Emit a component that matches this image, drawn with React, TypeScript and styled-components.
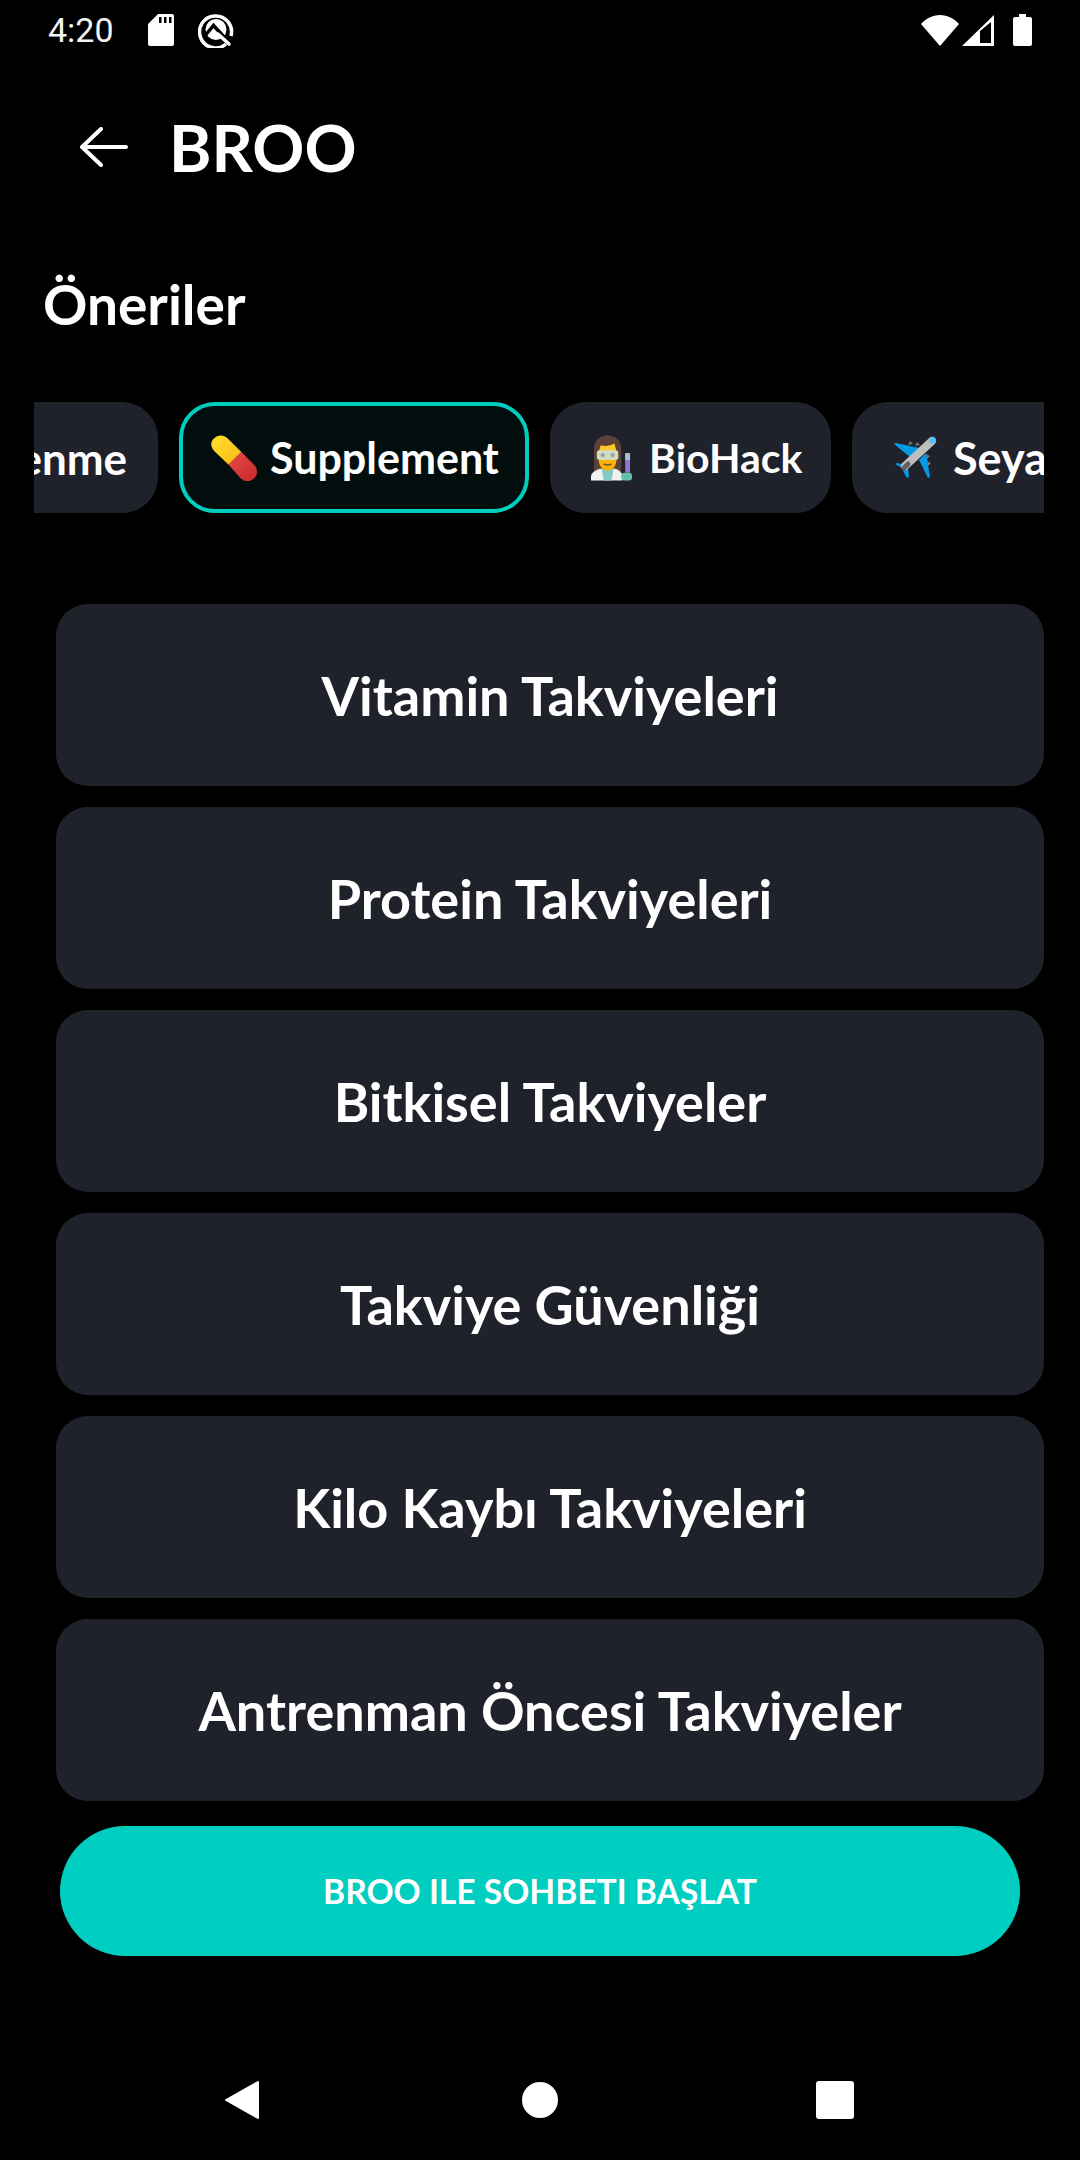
import React from 'react';
import styled, { createGlobalStyle } from 'styled-components';

const GlobalStyle = createGlobalStyle`
    html, body {
        margin: 0;
        padding: 0;
        background: #000;
    }
`;

const Screen = styled.div`
    display: flex;
    flex-direction: column;
    width: 1080px;
    height: 2160px;
    background: #000;
    color: #fff;
    font-family: Lato, 'Open Sans', sans-serif;
    overflow: hidden;
`;

const StatusBar = styled.div`
    display: flex;
    align-items: center;
    height: 60px;
    padding: 0 48px 0 48px;
`;

const Clock = styled.span`
    font-family: Roboto, sans-serif;
    font-size: 34px;
    line-height: 60px;
    width: 100px;
    color: #f4f4f4;
`;

const StatusIcons = styled.div`
    display: flex;
    align-items: center;
    gap: 24px;
`;

const StatusRight = styled.div`
    display: flex;
    align-items: center;
    gap: 3px;
    margin-left: auto;
`;

const Header = styled.div`
    display: flex;
    align-items: center;
    gap: 41px;
    height: 100px;
    margin-top: 37px;
    padding-left: 80px;
`;

const Title = styled.h1`
    margin: 0;
    font-size: 64.5px;
    font-weight: 700;
    line-height: 100px;
`;

const SectionTitle = styled.h2`
    margin: 72px 0 0 43px;
    font-size: 55px;
    font-weight: 700;
    line-height: 70px;
`;

const ChipScroller = styled.div`
    width: 1010px;
    margin: 63px 0 0 34px;
    overflow: hidden;
`;

const ChipTrack = styled.div`
    display: flex;
    gap: 21px;
    width: max-content;
    margin-left: -130px;
`;

const Chip = styled.div<{ $active?: boolean; $width: number; $fontSize: number }>`
    display: flex;
    align-items: center;
    box-sizing: border-box;
    height: 111px;
    width: ${(props) => props.$width}px;
    padding: 0 28px;
    border-radius: 36px;
    border: 4px solid ${(props) => (props.$active ? '#00cdbe' : '#1f222b')};
    background: ${(props) => (props.$active ? '#020e0d' : '#1f222b')};
    font-size: ${(props) => props.$fontSize}px;
    font-weight: 700;
    white-space: nowrap;
`;

const EmojiSlot = styled.span<{ $width: number; $inset: number }>`
    display: flex;
    flex: none;
    align-items: center;
    box-sizing: border-box;
    width: ${(props) => props.$width}px;
    padding-left: ${(props) => props.$inset}px;
`;

const CardList = styled.div`
    display: flex;
    flex-direction: column;
    gap: 21px;
    margin: 91px 36px 0 56px;
`;

const Card = styled.div`
    display: flex;
    align-items: center;
    justify-content: center;
    height: 182px;
    border-radius: 32px;
    background: #1f222b;
    font-size: 54px;
    font-weight: 700;
`;

const StartButton = styled.button`
    display: block;
    width: 960px;
    height: 130px;
    margin: 25px 0 0 60px;
    border: none;
    border-radius: 65px;
    background: #00cec0;
    color: #fff;
    font-family: inherit;
    font-size: 33.6px;
    font-weight: 700;
`;

const NavBar = styled.div`
    display: flex;
    align-items: center;
    height: 40px;
    margin-top: 124px;
    padding-left: 224px;
`;

const NavSlot = styled.div<{ $width: number }>`
    display: flex;
    width: ${(props) => props.$width}px;
`;

const SdIcon = () => (
    <svg width="26" height="32" viewBox="0 0 26 32">
        <path
            fill="#fff"
            fillRule="evenodd"
            d="M10 0h14a2 2 0 0 1 2 2v28a2 2 0 0 1-2 2H2a2 2 0 0 1-2-2V10zM11 3v6h2.500V3zM16 3v6h2.500V3zM21 3v6h2.500V3z"
        />
    </svg>
);

const QIcon = () => (
    <svg width="36" height="36" viewBox="0 0 36 36" fill="none">
        <path stroke="#fff" strokeWidth="3.500" d="M28 32A16 16 0 1 1 33 24" />
        <circle cx="18" cy="17.500" r="10.500" fill="#fff" />
        <path stroke="#000" strokeWidth="3.500" d="M6 25L15.500 13.500 27 26" />
        <path stroke="#fff" strokeWidth="3.500" strokeLinecap="round" d="M20 22L31 32" />
    </svg>
);

const WifiIcon = () => (
    <svg width="38" height="31" viewBox="0 0 38 31">
        <path fill="#fff" d="M19 31L0 9C5 3.500 11.500 0 19 0s14 3.500 19 9z" />
    </svg>
);

const SignalIcon = () => (
    <svg width="33" height="31" viewBox="0 0 33 31">
        <path fill="#fff" fillRule="evenodd" d="M32 0v31H0zM18 16v12h11V7z" />
    </svg>
);

const BatteryIcon = () => (
    <svg width="19" height="32" viewBox="0 0 19 32" style={{ marginLeft: 15 }}>
        <path fill="#fff" d="M6 0h7v3h4a2 2 0 0 1 2 2v25a2 2 0 0 1-2 2H2a2 2 0 0 1-2-2V5a2 2 0 0 1 2-2h4z" />
    </svg>
);

const BackArrow = () => (
    <svg width="48" height="40" viewBox="0 0 48 40" fill="none" stroke="#fff" strokeWidth="4" strokeLinecap="round" strokeLinejoin="round">
        <path d="M46 20H3M21 2L2 20l19 18" />
    </svg>
);

const PillEmoji = () => (
    <svg width="47" height="47" viewBox="0 0 48 48">
        <defs>
            <linearGradient id="pillTop" x1="0" y1="0" x2="1" y2="1">
                <stop offset="0" stopColor="#ffe12e" />
                <stop offset="1" stopColor="#fbb616" />
            </linearGradient>
            <linearGradient id="pillBottom" x1="0" y1="0" x2="1" y2="1">
                <stop offset="0" stopColor="#ea4a4a" />
                <stop offset="1" stopColor="#c62828" />
            </linearGradient>
        </defs>
        <path fill="url(#pillTop)" d="M3 4.500c4-4 10-4 14 0l14 14-13 13-14.500-14c-4-4-4.500-9.500-.500-13z" />
        <path fill="url(#pillBottom)" d="M31 18.500l13 13c4 4 4 10 0 14s-10 3.500-14-.500L18 31.500z" />
    </svg>
);

const ScientistEmoji = () => (
    <svg width="41" height="46" viewBox="0 0 42 46">
        <path fill="#5d4037" d="M3 37V14C3 5 9 0 17 0s14 5 14 14v23z" />
        <path fill="#f1f1f1" d="M0 46v-4c0-4 4-6 9-8h16c5 2 7 4 7 8v4z" />
        <path fill="#80cbc4" d="M11 34h12l-2 12h-8z" />
        <path fill="#ffb300" d="M8 16h18v9c0 6-4 11-9 11s-9-5-9-11z" />
        <path fill="#ffca28" d="M10 10c3 1 10 1 14-2l2 8H8z" />
        <rect x="6" y="15" width="22" height="10" rx="3" fill="#d3dcc0" />
        <circle cx="12" cy="20" r="2.200" fill="#90a4ae" />
        <circle cx="22" cy="20" r="2.200" fill="#90a4ae" />
        <path stroke="#6d4c41" strokeWidth="1.500" fill="none" d="M13 29q4 2.500 8 0" />
        <rect x="35" y="18" width="5" height="20" rx="1" fill="#9575cd" />
        <rect x="35" y="18" width="5" height="7" fill="#b0bec5" />
        <rect x="31" y="38" width="11" height="8" rx="3" fill="#66bfa9" />
    </svg>
);

const PlaneEmoji = () => (
    <svg width="43" height="43" viewBox="0 0 43 43">
        <path fill="#757575" d="M14 9l2-4 3 3zM21 10l2-4 3 3zM32 18l4 2-3 3zM33 25l4 2-3 3z" />
        <path fill="#039be5" d="M0 8l2-1 23 5-9 9zM36 41l-2 1-9-18 7-7zM1 28l2-1 9 2-2 4zM15 41l-2 1-4-7 5-4z" />
        <path stroke="#bdbdbd" strokeWidth="8" strokeLinecap="round" d="M11 30L38 5" />
        <path stroke="#616161" strokeWidth="5" strokeLinecap="round" d="M10 32L14 28" />
        <path stroke="#4fc3f7" strokeWidth="6" strokeLinecap="round" d="M38 5L39 4" />
    </svg>
);

const categories = [
    { label: 'Beslenme', width: 254, fontSize: 44 },
    { label: 'Supplement', icon: <PillEmoji />, slot: 59, inset: 0, width: 350, fontSize: 43, active: true },
    { label: 'BioHack', icon: <ScientistEmoji />, slot: 67, inset: 9, width: 281, fontSize: 41 },
    { label: 'Seyahat', icon: <PlaneEmoji />, slot: 69, inset: 10, width: 300, fontSize: 45 },
];

const suggestions = [
    'Vitamin Takviyeleri',
    'Protein Takviyeleri',
    'Bitkisel Takviyeler',
    'Takviye Güvenliği',
    'Kilo Kaybı Takviyeleri',
    'Antrenman Öncesi Takviyeler',
];

const App: React.FC = () => {
    return (
        <Screen>
            <GlobalStyle />
            <StatusBar>
                <Clock>4:20</Clock>
                <StatusIcons>
                    <SdIcon />
                    <QIcon />
                </StatusIcons>
                <StatusRight>
                    <WifiIcon />
                    <SignalIcon />
                    <BatteryIcon />
                </StatusRight>
            </StatusBar>
            <Header>
                <BackArrow />
                <Title>BROO</Title>
            </Header>
            <SectionTitle>Öneriler</SectionTitle>
            <ChipScroller>
                <ChipTrack>
                    {categories.map((c) => (
                        <Chip key={c.label} $active={c.active} $width={c.width} $fontSize={c.fontSize}>
                            {c.icon && (
                                <EmojiSlot $width={c.slot} $inset={c.inset}>
                                    {c.icon}
                                </EmojiSlot>
                            )}
                            {c.label}
                        </Chip>
                    ))}
                </ChipTrack>
            </ChipScroller>
            <CardList>
                {suggestions.map((s) => (
                    <Card key={s}>{s}</Card>
                ))}
            </CardList>
            <StartButton>BROO ILE SOHBETI BAŞLAT</StartButton>
            <NavBar>
                <NavSlot $width={298}>
                    <svg width="36" height="40" viewBox="0 0 36 40">
                        <path fill="#fff" stroke="#fff" strokeWidth="2" strokeLinejoin="round" d="M34 2v36L2 20z" />
                    </svg>
                </NavSlot>
                <NavSlot $width={294}>
                    <svg width="36" height="36" viewBox="0 0 36 36">
                        <circle cx="18" cy="18" r="18" fill="#fff" />
                    </svg>
                </NavSlot>
                <NavSlot $width={38}>
                    <svg width="38" height="38" viewBox="0 0 38 38">
                        <rect width="38" height="38" rx="3" fill="#fff" />
                    </svg>
                </NavSlot>
            </NavBar>
        </Screen>
    );
};

export default App;
